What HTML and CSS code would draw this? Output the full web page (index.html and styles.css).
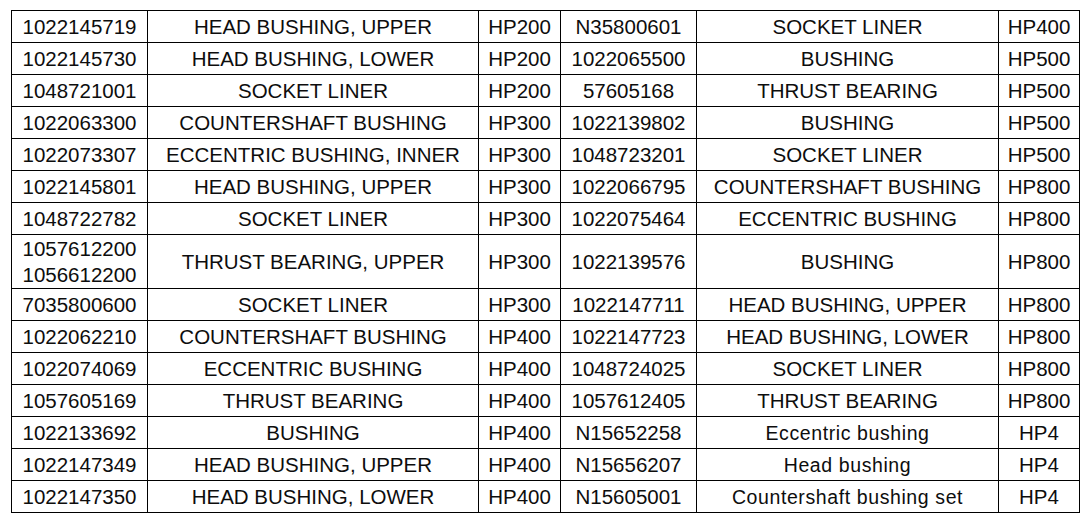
FILE: index.html
```html
<!DOCTYPE html>
<html>
<head>
<meta charset="utf-8">
<link rel="stylesheet" href="styles.css">
</head>
<body>
<table class="parts">
<colgroup>
<col class="c1"><col class="c2"><col class="c3"><col class="c4"><col class="c5"><col class="c6">
</colgroup>
<tbody>
<tr><td>1022145719</td><td>HEAD BUSHING, UPPER</td><td>HP200</td><td>N35800601</td><td>SOCKET LINER</td><td>HP400</td></tr>
<tr><td>1022145730</td><td>HEAD BUSHING, LOWER</td><td>HP200</td><td>1022065500</td><td>BUSHING</td><td>HP500</td></tr>
<tr><td>1048721001</td><td>SOCKET LINER</td><td>HP200</td><td>57605168</td><td>THRUST BEARING</td><td>HP500</td></tr>
<tr><td>1022063300</td><td>COUNTERSHAFT BUSHING</td><td>HP300</td><td>1022139802</td><td>BUSHING</td><td>HP500</td></tr>
<tr><td>1022073307</td><td>ECCENTRIC BUSHING, INNER</td><td>HP300</td><td>1048723201</td><td>SOCKET LINER</td><td>HP500</td></tr>
<tr><td>1022145801</td><td>HEAD BUSHING, UPPER</td><td>HP300</td><td>1022066795</td><td>COUNTERSHAFT BUSHING</td><td>HP800</td></tr>
<tr><td>1048722782</td><td>SOCKET LINER</td><td>HP300</td><td>1022075464</td><td>ECCENTRIC BUSHING</td><td>HP800</td></tr>
<tr class="tall"><td class="two">1057612200<br>1056612200</td><td>THRUST BEARING, UPPER</td><td>HP300</td><td>1022139576</td><td>BUSHING</td><td>HP800</td></tr>
<tr><td>7035800600</td><td>SOCKET LINER</td><td>HP300</td><td>1022147711</td><td>HEAD BUSHING, UPPER</td><td>HP800</td></tr>
<tr><td>1022062210</td><td>COUNTERSHAFT BUSHING</td><td>HP400</td><td>1022147723</td><td>HEAD BUSHING, LOWER</td><td>HP800</td></tr>
<tr><td>1022074069</td><td>ECCENTRIC BUSHING</td><td>HP400</td><td>1048724025</td><td>SOCKET LINER</td><td>HP800</td></tr>
<tr><td>1057605169</td><td>THRUST BEARING</td><td>HP400</td><td>1057612405</td><td>THRUST BEARING</td><td>HP800</td></tr>
<tr><td>1022133692</td><td>BUSHING</td><td>HP400</td><td>N15652258</td><td class="lc">Eccentric bushing</td><td>HP4</td></tr>
<tr><td>1022147349</td><td>HEAD BUSHING, UPPER</td><td>HP400</td><td>N15656207</td><td class="lc">Head bushing</td><td>HP4</td></tr>
<tr><td>1022147350</td><td>HEAD BUSHING, LOWER</td><td>HP400</td><td>N15605001</td><td class="lc">Countershaft bushing set</td><td>HP4</td></tr>
</tbody>
</table>
</body>
</html>
```
FILE: styles.css
```css
html, body {
  margin: 0;
  padding: 0;
  background: #ffffff;
}
body {
  padding: 10px 0 0 11px;
  font-family: "Liberation Sans", Arial, sans-serif;
  color: #0d0d0d;
}
.parts {
  border-collapse: collapse;
  table-layout: fixed;
  width: 1068px;
}
.c1 { width: 136px; }
.c2 { width: 331px; }
.c3 { width: 82px; }
.c4 { width: 136px; }
.c5 { width: 302px; }
.c6 { width: 81px; }
.parts td {
  border: 1px solid #000000;
  height: 31px;
  padding: 0;
  text-align: center;
  vertical-align: middle;
  font-size: 20.5px;
  line-height: 26px;
  white-space: nowrap;
  overflow: hidden;
}
.parts tr.tall td {
  height: 53px;
}
.parts td.lc {
  font-size: 19.5px;
  letter-spacing: 0.6px;
}
```
